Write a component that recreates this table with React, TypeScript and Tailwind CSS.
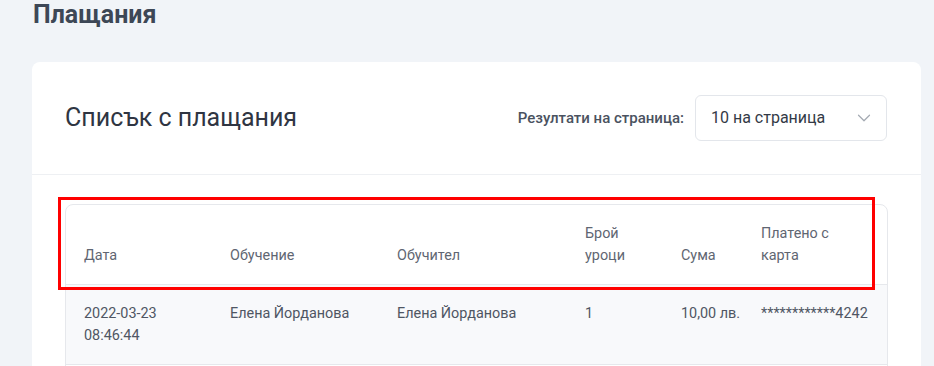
import { ChevronDown } from "lucide-react";

const payments = [
  {
    date: "2022-03-23",
    time: "08:46:44",
    course: "Елена Йорданова",
    teacher: "Елена Йорданова",
    lessons: "1",
    amount: "10,00 лв.",
    card: "************4242",
  },
];

const cols = "grid grid-cols-[146px_167px_188px_96px_80px_1fr]";

const App = () => {
  return (
    <div
      style={{ fontFamily: "Roboto, 'Noto Sans', sans-serif" }}
      className="relative h-[366px] w-[934px] overflow-hidden bg-[#f1f4f8]"
    >
      <h1 className="px-[33px] text-[25px] font-bold leading-[30px] text-[#3d4756]">
        Плащания
      </h1>

      <div className="ml-[32px] mt-[32px] w-[889px] rounded-[8px] bg-white">
        <div className="flex items-center justify-between px-[33px] py-[33px] border-b border-[#eef0f3]">
          <h2 className="text-[25px] leading-[46px] text-[#2f3542]">
            Списък с плащания
          </h2>
          <div className="flex items-center gap-[11px]">
            <span className="text-[15px] font-medium text-[#4a5260]">
              Резултати на страница:
            </span>
            <div className="mr-[1px] flex h-[46px] w-[192px] items-center justify-between rounded-[6px] border border-[#e3e6eb] pl-[15px] pr-[11px]">
              <span className="text-[16px] text-[#333a46]">10 на страница</span>
              <ChevronDown size={22} strokeWidth={1.3} className="text-[#a3a9b2]" />
            </div>
          </div>
        </div>

        <div className="px-[33px] pt-[29px]">
          <div className="overflow-hidden rounded-t-[8px] border border-[#e6e8ec] text-[14.4px] leading-[22px]">
            <div className={`${cols} border-b border-[#e6e8ec] text-[#5f6672]`}>
              <div className="self-end px-[18px] pt-[18px] pb-[17px]">Дата</div>
              <div className="self-end px-[18px] pt-[18px] pb-[17px]">Обучение</div>
              <div className="self-end px-[18px] pt-[18px] pb-[17px]">Обучител</div>
              <div className="self-end px-[18px] pt-[18px] pb-[17px]">
                Брой
                <br />
                уроци
              </div>
              <div className="self-end px-[18px] pt-[18px] pb-[17px]">Сума</div>
              <div className="self-end px-[18px] pt-[18px] pb-[17px]">
                Платено с
                <br />
                карта
              </div>
            </div>
            {payments.map((p, index) => (
              <div
                key={index}
                className={`${cols} border-b border-[#e6e8ec] bg-[#f8f9fb] text-[#4f5663]`}
              >
                <div className="px-[18px] pt-[18px] pb-[17px]">
                  {p.date}
                  <br />
                  {p.time}
                </div>
                <div className="px-[18px] pt-[18px] pb-[17px] whitespace-nowrap">{p.course}</div>
                <div className="px-[18px] pt-[18px] pb-[17px] whitespace-nowrap">{p.teacher}</div>
                <div className="px-[18px] pt-[18px] pb-[17px]">{p.lessons}</div>
                <div className="px-[18px] pt-[18px] pb-[17px] whitespace-nowrap">{p.amount}</div>
                <div className="px-[18px] pt-[18px] pb-[17px] whitespace-nowrap">{p.card}</div>
              </div>
            ))}
            <div className="h-[40px]" />
          </div>
        </div>
      </div>

      {/* annotation box over the table header */}
      <div className="pointer-events-none absolute left-[58px] top-[197px] h-[93px] w-[817px] border-[3px] border-[#ff0000]" />
    </div>
  );
};

export default App;
